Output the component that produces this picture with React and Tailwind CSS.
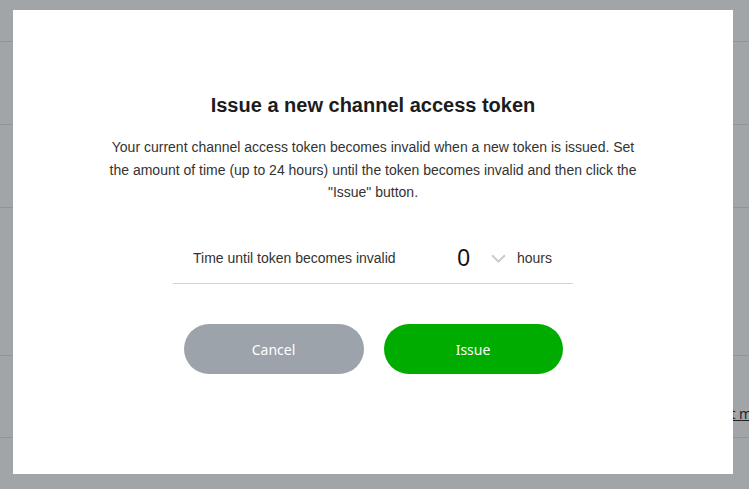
import React from 'react';

// Page behind the dialog, already dimmed by the overlay
function BackgroundPage() {
  return (
    <div className="flex flex-col w-full">
      <div className="h-[42px] border-b border-[#909397]"></div>
      <div className="h-[83px] border-b border-[#909397]"></div>
      <div className="h-[83px] border-b border-[#909397]"></div>
      <div className="h-[148px] border-b border-[#909397]"></div>
      <div className="h-[82px] border-b border-[#909397] flex items-center">
        <span className="ml-[709px] mt-[34px] whitespace-nowrap text-[14px] text-[#1f2226] underline font-['Noto_Sans',sans-serif]">
          Test message
        </span>
      </div>
    </div>
  );
}

function Chevron() {
  return (
    <svg width="15" height="9" viewBox="0 0 15 9" fill="none">
      <path d="M1 1.2L7.5 7.5L14 1.2" stroke="#c9cdd1" strokeWidth="2" />
    </svg>
  );
}

export default function App() {
  return (
    <div className="relative w-[749px] h-[489px] overflow-hidden bg-[#a2a5a8]">
      <BackgroundPage />

      {/* Dialog */}
      <div className="absolute left-[13px] top-[10px] w-[720px] h-[464px] bg-white flex flex-col items-center pt-[82px] font-['Liberation_Sans',Arial,sans-serif]">
        <h2 className="text-[20px] leading-[26px] font-bold text-[#1c1c1c]">
          Issue a new channel access token
        </h2>
        <p className="w-[538px] mt-[18px] text-center text-[14px] leading-[22.5px] text-[#333333]">
          Your current channel access token becomes invalid when a new token is issued. Set the amount of time (up to 24 hours) until the token becomes invalid and then click the "Issue" button.
        </p>

        <div className="w-[400px] h-[50px] mt-[30px] flex items-center justify-between pl-[20px] pr-[21px] border-b border-[#d3d3d3]">
          <span className="text-[14px] text-[#333333]">Time until token becomes invalid</span>
          <div className="flex items-center">
            <span className="text-[23px] leading-none text-[#111111] mr-[21px]">0</span>
            <Chevron />
            <span className="ml-[11px] text-[14px] text-[#333333]">hours</span>
          </div>
        </div>

        <div className="flex gap-[20px] mt-[40px] font-['Noto_Sans',sans-serif]">
          <button className="w-[180px] h-[50px] rounded-full bg-[#9ca3aa] text-white text-[14px] pt-[2px]">
            Cancel
          </button>
          <button className="w-[179px] h-[50px] rounded-full bg-[#00ac00] text-white text-[14px] pt-[2px]">
            Issue
          </button>
        </div>
      </div>
    </div>
  );
}
